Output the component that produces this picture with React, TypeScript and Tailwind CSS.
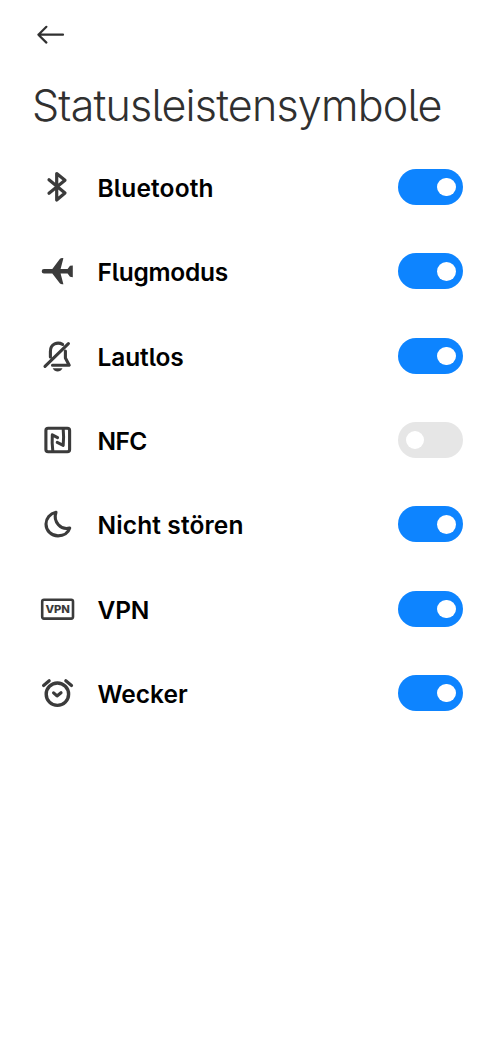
import React, { useState } from 'react';
import clsx from 'clsx';

type StatusItem = {
  id: string;
  label: string;
  enabled: boolean;
  labelClass: string;
  icon: React.ReactNode;
};

const ITEMS: StatusItem[] = [
  {
    id: 'bluetooth',
    label: 'Bluetooth',
    enabled: true,
    labelClass: 'tracking-[0.15px]',
    icon: <path d="M10 10.8 26 24.1 17.7 31V4.6L26 11.3 10 24.3" strokeWidth="3.2" />,
  },
  {
    id: 'airplane',
    label: 'Flugmodus',
    enabled: true,
    labelClass: 'tracking-[-0.25px]',
    icon: (
      <path
        d="M5 16H13.3L20.8 6.1Q22 4.7 24.4 5.2L21.6 16H28.6L31 12.8 33.8 12.4V24.2L31 23.8 28.6 20.6H21.6L24.4 31.2Q22 31.7 20.8 30.3L13.3 20.6H5A2.3 2.3 0 0 1 5 16Z"
        fill="currentColor"
        stroke="none"
      />
    ),
  },
  {
    id: 'silent',
    label: 'Lautlos',
    enabled: true,
    labelClass: 'tracking-[-0.1px]',
    icon: (
      <>
        <path d="M29.4 5.6 6 28.4M11.4 19V13.4C11.4 5.6 18.6 3.6 23.6 6.4M26.4 13V20L30.2 27.2H13.5" strokeWidth="3.1" />
        <path d="M13.7 30.3H23.5Q21.7 33.6 18.6 33.6T13.7 30.3Z" fill="currentColor" stroke="none" />
      </>
    ),
  },
  {
    id: 'nfc',
    label: 'NFC',
    enabled: false,
    labelClass: 'tracking-[-0.6px]',
    icon: (
      <>
        <rect x="6.9" y="6.2" width="23.7" height="23.6" rx="2.2" strokeWidth="3.1" />
        <path d="M13.8 29Q12.8 21 13.3 12.8L18.6 15.6M18.2 20.4 24.2 23.4Q25 15 24.2 7" strokeWidth="3" />
      </>
    ),
  },
  {
    id: 'dnd',
    label: 'Nicht stören',
    enabled: true,
    labelClass: 'tracking-[0.12px]',
    icon: (
      <path
        d="M17 6.3C11 7.5 7 12.3 7 18 7 24.7 12.3 29.9 19 29.9 24.8 29.9 29.4 26.7 30.7 22 22 24.4 13.8 16 17 6.3Z"
        strokeWidth="3.1"
      />
    ),
  },
  {
    id: 'vpn',
    label: 'VPN',
    enabled: true,
    labelClass: 'tracking-[-0.15px]',
    icon: (
      <>
        <rect x="3.2" y="8.8" width="30.8" height="18.8" rx="1.8" strokeWidth="2.6" />
        <text
          x="6.4"
          y="22.1"
          textLength="24.6"
          lengthAdjust="spacingAndGlyphs"
          fill="currentColor"
          stroke="none"
          className="font-['Inter',sans-serif] text-[11px] font-extrabold"
        >
          VPN
        </text>
      </>
    ),
  },
  {
    id: 'alarm',
    label: 'Wecker',
    enabled: true,
    labelClass: 'tracking-[0px]',
    icon: (
      <>
        <circle cx="18.4" cy="19.2" r="11.2" strokeWidth="3.4" />
        <path d="M14.6 17.9 18 20.9 22 17.7M4.6 10.5 10.2 5.8M26.8 5.8 32.5 10.5" strokeWidth="3.2" />
      </>
    ),
  },
];

function Toggle({ checked, label, onChange }: { checked: boolean; label: string; onChange: () => void }) {
  return (
    <button
      type="button"
      role="switch"
      aria-checked={checked}
      aria-label={label}
      onClick={onChange}
      className={clsx(
        'flex h-9 w-[65px] shrink-0 items-center rounded-full px-[7.5px]',
        checked ? 'justify-end bg-[#0d84ff]' : 'justify-start bg-[#e6e6e6]'
      )}
    >
      <span className="size-[18.5px] rounded-full bg-white" />
    </button>
  );
}

export default function App() {
  const [enabled, setEnabled] = useState<Record<string, boolean>>(
    Object.fromEntries(ITEMS.map((item) => [item.id, item.enabled]))
  );

  const toggle = (id: string) => setEnabled((prev) => ({ ...prev, [id]: !prev[id] }));

  return (
    <main className="flex min-h-screen flex-col bg-white font-['Inter',sans-serif] [font-feature-settings:'cv05']">
      <header className="pt-[22px] pl-[34px]">
        <button type="button" aria-label="Zurück" className="block text-[#303030]">
          <svg
            width="32"
            height="26"
            viewBox="0 0 32 26"
            fill="none"
            stroke="currentColor"
            strokeWidth="2.2"
            strokeLinecap="round"
            strokeLinejoin="round"
          >
            <path d="M12.4 4.8 4.4 12.7 12.4 20.6M4.4 12.7H29" />
          </svg>
        </button>
        <h1 className="mt-[31px] -ml-[2px] h-[66px] text-[43px] leading-[52px] font-light tracking-[-0.8px] whitespace-nowrap text-[#303030]">
          Statusleistensymbole
        </h1>
      </header>

      <ul>
        {ITEMS.map((item) => (
          <li key={item.id} className="flex h-[84.33px] items-center pr-[37px] pl-[39px]">
            <svg
              width="36"
              height="36"
              viewBox="0 0 36 36"
              fill="none"
              stroke="currentColor"
              strokeLinecap="round"
              strokeLinejoin="round"
              className="shrink-0 text-[#3b3b3b]"
            >
              {item.icon}
            </svg>
            <span className={clsx('ml-[22.5px] flex-1 pt-[1.4px] text-[24.5px] leading-8 font-semibold text-black', item.labelClass)}>
              {item.label}
            </span>
            <Toggle checked={enabled[item.id]} label={item.label} onChange={() => toggle(item.id)} />
          </li>
        ))}
      </ul>
    </main>
  );
}
